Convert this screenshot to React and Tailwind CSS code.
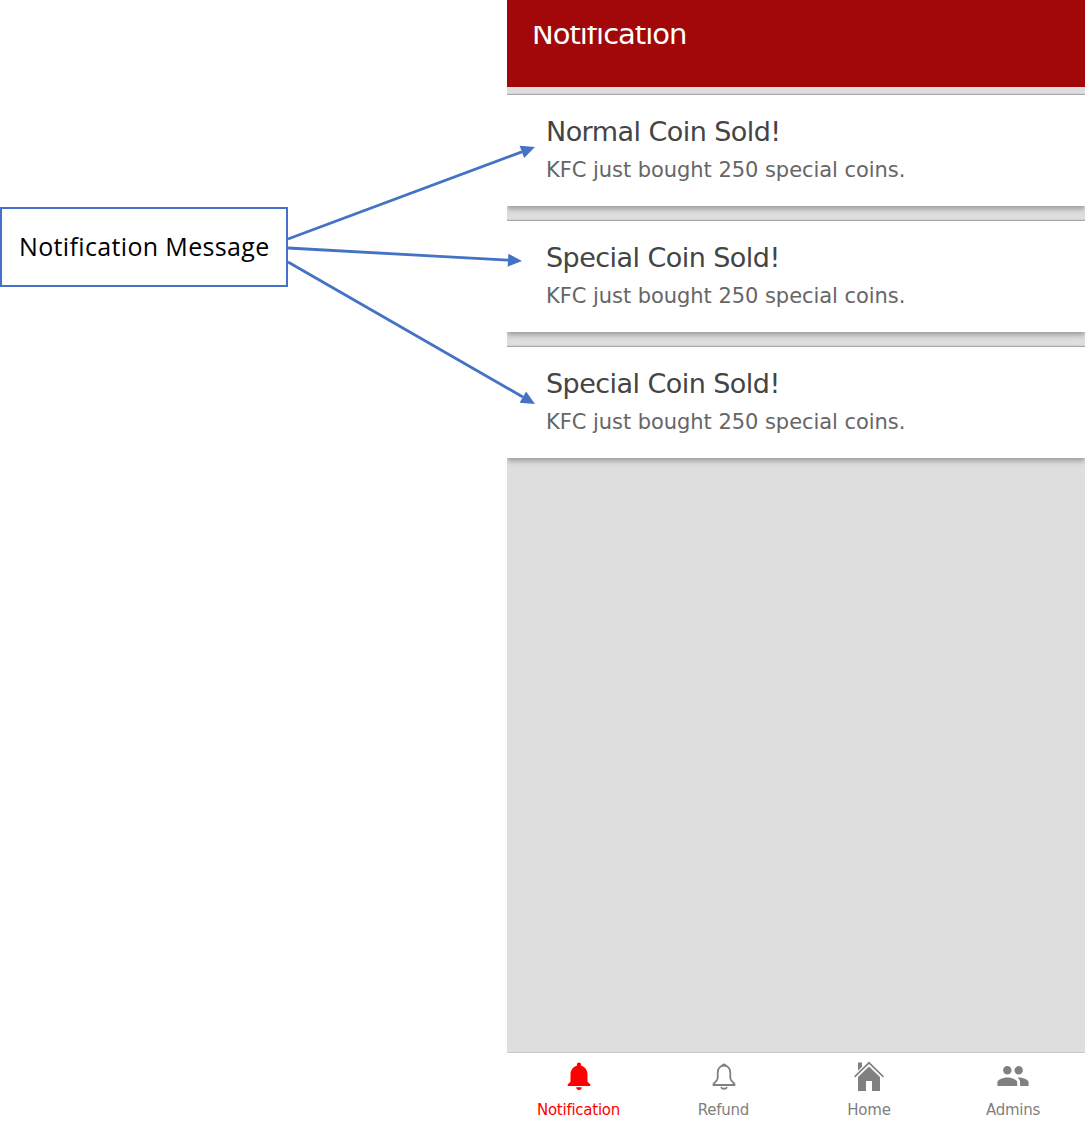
const font = { fontFamily: '"DejaVu Sans", sans-serif' };

function Card({ title }) {
  return (
    <div className="h-[111px] bg-white pl-[39px] pt-[19px] shadow-[0_3px_5px_rgba(0,0,0,0.3),0_-1px_1px_rgba(0,0,0,0.22)]">
      <div className="text-[27px] leading-[36px] text-[#444444] tracking-[-0.55px]">{title}</div>
      <div className="mt-[6px] text-[21px] leading-[28px] text-[#666666] tracking-[-0.05px]">KFC just bought 250 special coins.</div>
    </div>
  );
}

function NavItem({ icon, label, active }) {
  return (
    <div className={`flex flex-col items-center ${active ? 'text-[#ff0000]' : 'text-[#808080]'}`}>
      <div className="flex h-[34px] w-[34px] items-center justify-center">{icon}</div>
      <div className="mt-[7px] text-[15px] leading-[20px] tracking-[-0.25px]">{label}</div>
    </div>
  );
}

function Arrow({ x1, y1, x2, y2 }) {
  const a = Math.atan2(y2 - y1, x2 - x1);
  const L = 14, W = 6.5;
  const bx = x2 - L * Math.cos(a), by = y2 - L * Math.sin(a);
  const px = -Math.sin(a) * W, py = Math.cos(a) * W;
  return (
    <g>
      <line x1={x1} y1={y1} x2={bx} y2={by} stroke="#4472c4" strokeWidth="2.8" />
      <polygon points={`${x2},${y2} ${bx + px},${by + py} ${bx - px},${by - py}`} fill="#4472c4" />
    </g>
  );
}

export default function App() {
  return (
    <div className="relative flex h-[1125px] w-[1085px] overflow-hidden bg-white">
      <div className="flex w-[507px] shrink-0 items-start pt-[207px]">
        <div className="flex h-[80px] w-[288px] items-center border-2 border-[#4472c4] pl-[17px] text-[25px] text-black" style={{ fontFamily: '"Open Sans", sans-serif' }}>
          <span className="tracking-[0.35px] whitespace-nowrap">Notification Message</span>
        </div>
      </div>

      <div className="flex w-[578px] flex-col overflow-hidden bg-[#dedede]" style={font}>
        <div className="relative z-10 h-[87px] bg-[#a20709] pl-[25px] pt-[26px]">
          <div className="h-[20px] overflow-hidden">
            <div className="mt-[-11px] text-[29px] leading-[38px] text-white tracking-[-1px]">Notification</div>
          </div>
        </div>
        <div className="flex flex-1 flex-col gap-[15px] pt-[8px]">
          <Card title="Normal Coin Sold!" />
          <Card title="Special Coin Sold!" />
          <Card title="Special Coin Sold!" />
        </div>
        <div className="grid h-[73px] grid-cols-[143px_147px_144px_144px] border-t border-[#c8c8c8] bg-white pt-[6px]">
          <NavItem
            active
            label="Notification"
            icon={
              <svg width="34" height="34" viewBox="0 0 24 24" fill="currentColor">
                <path d="M12 22c1.1 0 2-.9 2-2h-4c0 1.1.89 2 2 2zm6-6v-5c0-3.07-1.64-5.64-4.5-6.32V4c0-.83-.67-1.5-1.5-1.5s-1.5.67-1.5 1.5v.68C7.63 5.36 6 7.92 6 11v5l-2 2v1h16v-1l-2-2z" />
              </svg>
            }
          />
          <NavItem
            label="Refund"
            icon={
              <svg width="34" height="34" viewBox="0 0 34 34" fill="none" stroke="currentColor" strokeWidth="1.8" strokeLinejoin="round" strokeLinecap="round">
                <path d="M17 6.5c-4.3 0-6.3 3.4-6.3 7.4v5.4c0 1.8-2.6 3.6-4.2 5.6v1.1h21v-1.1c-1.6-2-4.2-3.8-4.2-5.6v-5.4c0-4-2-7.4-6.3-7.4z" />
                <path d="M15.2 6.6a1.9 1.9 0 0 1 3.6 0" />
                <path d="M14.4 28.6c.6 1.5 4.6 1.5 5.2 0" />
              </svg>
            }
          />
          <NavItem
            label="Home"
            icon={
              <svg width="34" height="34" viewBox="0 0 34 34" fill="currentColor">
                <path d="M2 17.2 17 2.5l15 14.7-1.1 1.2L17 5 3.1 18.4z" />
                <path d="M6 3.5h4v4.2l-4 4z" />
                <path d="M17 7.5 28 18v14h-8V22h-6v10H6V18z" />
              </svg>
            }
          />
          <NavItem
            label="Admins"
            icon={
              <svg width="34" height="34" viewBox="0 0 24 24" fill="currentColor">
                <path d="M16 11c1.66 0 2.99-1.34 2.99-3S17.66 5 16 5c-1.66 0-3 1.34-3 3s1.34 3 3 3zm-8 0c1.66 0 2.99-1.34 2.99-3S9.66 5 8 5C6.34 5 5 6.34 5 8s1.34 3 3 3zm0 2c-2.33 0-7 1.17-7 3.5V19h14v-2.5c0-2.33-4.67-3.5-7-3.5zm8 0c-.29 0-.62.02-.97.05 1.16.84 1.97 1.97 1.97 3.45V19h6v-2.5c0-2.33-4.67-3.5-7-3.5z" />
              </svg>
            }
          />
        </div>
      </div>

      <svg className="absolute left-0 top-0 pointer-events-none z-20" width="1085" height="1125">
        <Arrow x1={288} y1={239} x2={535} y2={147} />
        <Arrow x1={288} y1={248} x2={522} y2={261} />
        <Arrow x1={288} y1={262} x2={535} y2={404} />
      </svg>
    </div>
  );
}
